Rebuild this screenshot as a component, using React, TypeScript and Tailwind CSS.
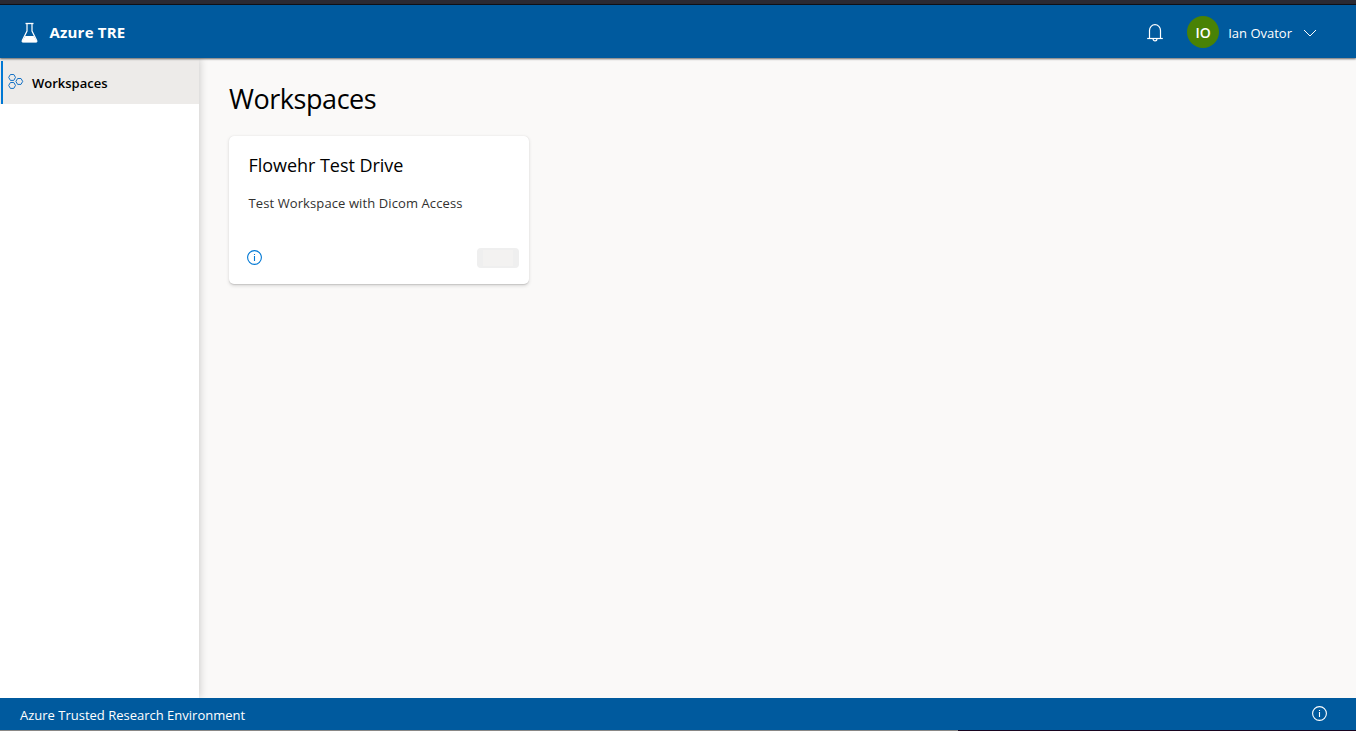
function Flask() {
  return (
    <svg className="mt-[2px] h-[22px] w-[18px]" viewBox="0 0 18 22" fill="none" stroke="white">
      <path d="M4.5 1.5h8" strokeWidth="1.3" />
      <path d="M6 1.5v7.5L1.3 18.6Q.8 20 2.2 20h12.6q1.4 0 .9-1.4L11 9V1.5" strokeWidth="1.2" />
      <path d="M4.3 14h8.4l2.9 4.8q.4 1.4-.8 1.4H2.2q-1.2 0-.8-1.4z" fill="white" stroke="none" />
    </svg>
  );
}

function Bell() {
  return (
    <svg className="mt-[2px] h-[20px] w-[18px]" viewBox="0 0 18 20" fill="none" stroke="white" strokeWidth="1.2">
      <path d="M3.5 15.8V7.4a5.5 5.7 0 0 1 11 0v8.4" />
      <path d="M1.2 15.5h15.6" />
      <path d="M7.1 16a1.9 1.9 0 0 0 3.8 0" />
    </svg>
  );
}

function Info({ className }: { className: string }) {
  return (
    <svg className={className} viewBox="0 0 15 15" fill="none" stroke="currentColor">
      <circle cx="7.5" cy="7.5" r="6.9" strokeWidth="1.1" />
      <path d="M7.5 6v5M7.5 4v1.1" strokeWidth="1.1" />
    </svg>
  );
}

function Hexagons() {
  return (
    <svg className="-mt-[3px] h-[17px] w-[16px]" viewBox="0 0 16 17" fill="none" stroke="#1471c5">
      <path d="M2.4 1.5h3.4l1.7 2.9-1.7 3H2.4L.7 4.4z" />
      <path d="M2.4 9.5h3.4l1.7 2.9-1.7 3H2.4L.7 12.4z" />
      <path d="M9.6 5.5H13l1.7 2.9-1.7 3H9.6L7.9 8.4z" />
    </svg>
  );
}

export default function App() {
  return (
    <div className="flex h-[731px] w-full flex-col overflow-hidden bg-[#faf9f8] font-['Open_Sans',sans-serif] text-black">
      <div className="h-[5px] shrink-0 border-b border-[#111118] bg-[#2b2a33]" />
      <header className="z-10 flex h-[53px] shrink-0 items-center bg-[#005a9e] pl-[21px] text-white shadow-[0_1px_2px_rgba(0,0,0,0.6)]">
        <Flask />
        <span className="ml-[10.5px] text-[15px] leading-5 font-bold tracking-[0.2px]">Azure TRE</span>
        <div className="mr-[39px] ml-auto flex items-center">
          <Bell />
          <div className="ml-[23px] flex size-8 items-center justify-center rounded-full bg-[#498205] pt-[3px] text-[14px] leading-5 font-semibold">IO</div>
          <span className="mt-[2px] ml-[9px] text-[13px] leading-5">Ian Ovator</span>
          <svg className="mt-[2px] ml-[11px] h-2 w-[14px]" viewBox="0 0 14 8" fill="none" stroke="white">
            <path d="M1 1l6 6 6-6" />
          </svg>
        </div>
      </header>
      <div className="flex min-h-0 flex-1">
        <nav className="w-[199px] shrink-0 bg-white shadow-[1px_0_8px_rgba(0,0,0,0.18)]">
          <div className="bg-[#edebe9] pt-[3px] pl-px">
            <div className="flex h-[43px] items-center border-l-2 border-[#0078d4] pl-[5px]">
              <Hexagons />
              <span className="ml-2 text-[13px] leading-5 font-semibold">Workspaces</span>
            </div>
          </div>
        </nav>
        <main className="flex-1 pt-[23px] pl-[30px]">
          <h1 className="text-[27px] leading-9 tracking-[-0.45px]">Workspaces</h1>
          <section className="mt-[19px] flex h-[148px] w-[300px] flex-col rounded-[5px] bg-white pt-[17px] pr-[10px] pl-[19.5px] shadow-[0_1.6px_3.6px_rgba(0,0,0,0.13),0_0.3px_1px_rgba(0,0,0,0.11)]">
            <h2 className="text-[18px] leading-6 tracking-[-0.04px]">Flowehr Test Drive</h2>
            <p className="mt-4 text-[13px] leading-5 tracking-[0.1px] text-[#323130]">Test Workspace with Dicom Access</p>
            <div className="mt-[35px] flex h-5 items-center justify-between">
              <Info className="-mt-px -ml-[1.5px] size-[15px] text-[#0078d4]" />
              <div className="h-5 w-[42px] rounded-[4px] bg-[#efefef] px-[6px] py-[2px]">
                <div className="h-4 bg-[#f3f2f1]" />
              </div>
            </div>
          </section>
        </main>
      </div>
      <footer className="z-10 flex h-8 shrink-0 items-center justify-between bg-[#005a9e] pt-[2px] pr-[29px] pl-5 text-white">
        <span className="text-[13px] leading-5">Azure Trusted Research Environment</span>
        <Info className="mt-[-3px] size-[15px]" />
      </footer>
      <div className="flex h-px shrink-0">
        <div className="w-[958px] bg-[#8a8886]" />
        <div className="flex-1 bg-[#18051f]" />
      </div>
    </div>
  );
}
